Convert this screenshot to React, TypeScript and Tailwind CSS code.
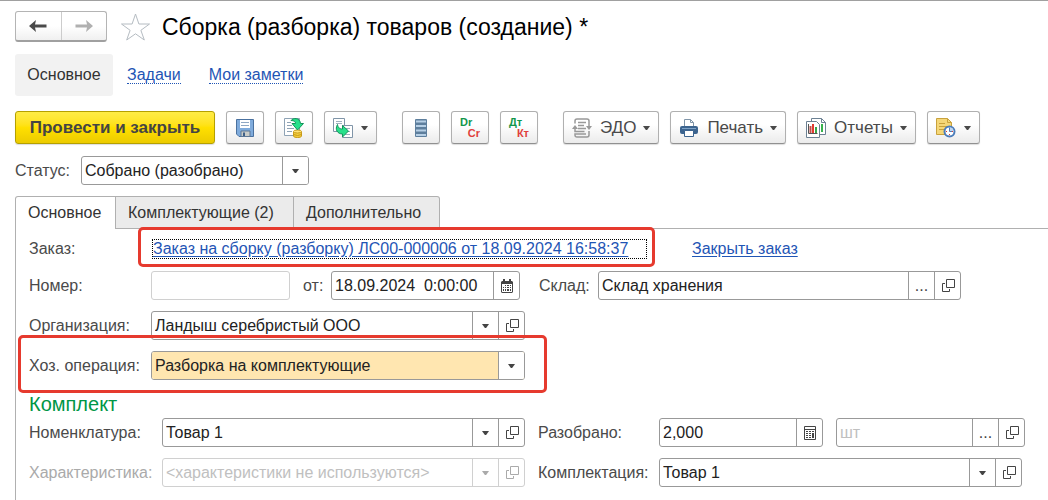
import type { ReactNode } from 'react';
import clsx from 'clsx';

const TABS = [
  { label: 'Основное', active: true, width: 'w-[101px]' },
  { label: 'Комплектующие (2)', active: false, width: 'w-[178px]' },
  { label: 'Дополнительно', active: false, width: 'w-[146px]' },
];

function Caret() {
  return (
    <svg width="7" height="4" viewBox="0 0 7 4" fill="currentColor" aria-hidden="true">
      <path d="M0 0h7L4.5 3.4q-1 1-2 0z" />
    </svg>
  );
}

function OpenIcon() {
  return (
    <svg width="14" height="14" viewBox="0 0 14 14" fill="none" stroke="currentColor" aria-hidden="true">
      <path d="M5.5.5h8v8h-8z" />
      <path d="M4 4.5H1.5v8h7V10" />
    </svg>
  );
}

function CalendarIcon() {
  return (
    <svg width="14" height="14" viewBox="0 0 14 14" aria-hidden="true">
      <path fill="#444" d="M2 2h1V0h2v2h4V0h2v2h1l1 1v10l-1 1H2l-1-1V3z" />
      <path fill="#fff" d="M2 5h10v8H2z" />
      <path
        fill="#444"
        d="M5 6h1v1H5zM7 6h2v1H7zM10 6h1v1h-1zM3 8h1v1H3zM5 8h1v1H5zM7 8h2v1H7zM10 8h1v1h-1zM3 10h1v2H3zM5 10h1v2H5zM7 10h2v2H7zM10 10h1v2h-1z"
      />
    </svg>
  );
}

function CalculatorIcon() {
  return (
    <svg width="12" height="14" viewBox="0 0 12 14" aria-hidden="true">
      <path fill="none" stroke="#444" d="M.5.5h11v13H.5zM.5 3.5h11" />
      <path
        fill="#444"
        d="M2 5h2v1H2zM5 5h2v1H5zM8 5h2v1H8zM2 7h2v1H2zM5 7h2v1H5zM8 7h2v5H8zM2 9h2v1H2zM5 9h2v1H5zM2 11h2v1H2zM5 11h2v1H5z"
      />
    </svg>
  );
}

function SaveIcon() {
  return (
    <svg width="18" height="18" viewBox="0 0 18 18" aria-hidden="true">
      <path d="M.5.5h17v17H3L.5 15z" fill="#7fabdc" stroke="#4a719f" />
      <path d="M4 1h10v8H4z" fill="#fff" />
      <path d="M5 3.5h8M5 6.5h8" stroke="#8fa8c4" />
      <path d="M5 12h9v5.5H5z" fill="#c9ccc9" stroke="#5d7795" />
      <path d="M7 13.5h2V17H7z" fill="#3f6088" />
    </svg>
  );
}

function PostIcon() {
  return (
    <svg width="20" height="20" viewBox="0 0 20 20" aria-hidden="true">
      <path d="M.5.5h15v17H.5z" fill="#fff" stroke="#8fa3b5" />
      <path d="M3 4.5h4M3 7.5h5M3 10.5h7M3 13.5h5" stroke="#8fa3b5" />
      <path d="M9.5 14v4c0 2 8 2 8 0v-4" fill="#f3cd3c" stroke="#c79a1a" />
      <ellipse cx="13.5" cy="13.5" rx="4" ry="1.5" fill="#ffe477" stroke="#c79a1a" />
      <path d="M9.5 16.5q4 2 8 0" fill="none" stroke="#c79a1a" />
      <path d="M7 2.5C9-.5 16-.5 16.500 5.500h3L13.500 12 8 5.500h3.500C11.500 3.500 10 2.500 7 2.500z" fill="#27e08a" stroke="#12935a" />
    </svg>
  );
}

function CreateFromIcon() {
  return (
    <svg width="20" height="20" viewBox="0 0 20 20" aria-hidden="true">
      <path d="M.5.5h11v13H.5z" fill="#fff" stroke="#8095a8" />
      <path d="M3 3.5h6M3 5.5h6" stroke="#9fb0bf" />
      <path d="M9.5 7.5h10v12h-10z" fill="#fff" stroke="#8095a8" />
      <path d="M13 10.5h4M14 13.5h3M12 16.5h5" stroke="#9fb0bf" />
      <path d="M4.500 6.500c-3 5 0 9.500 5 9.500v3l6-6-6-5.500v3.500c-2.500 0-4.500-1-5-4.500z" fill="#27e08a" stroke="#12935a" />
    </svg>
  );
}

function RegistersIcon() {
  return (
    <svg width="14" height="18" viewBox="0 0 14 18" aria-hidden="true">
      <rect x="1" width="12" height="18" rx="1" fill="#5e7f9d" />
      <path d="M2 2.500h10M2 7h10M2 11.500h10M2 16h10" stroke="#b7d0e6" strokeWidth="2" />
    </svg>
  );
}

function EdoIcon() {
  return (
    <svg width="20" height="20" viewBox="0 0 20 20" fill="none" stroke="#999" strokeWidth="1.5" aria-hidden="true">
      <path d="M3 5.5V3c0-1.300.7-2 2-2h10c1.300 0 2 .7 2 2v5M3 11v2.500h9.500" />
      <path d="M17 13v4c0 1.300-.7 2-2 2H5c-1.300 0-2-.7-2-2v-1h11" />
      <path d="M6 4.500h8M6 7.500h6M6 10.500h8" />
      <path d="M3 7L0 11h6zM17 12l-3-4h6z" fill="#999" stroke="none" />
    </svg>
  );
}

function PrintIcon() {
  return (
    <svg width="18" height="18" viewBox="0 0 18 18" aria-hidden="true">
      <path d="M4.5 8V.5h6l3 3V8" fill="#fff" stroke="#8095a8" />
      <path d="M10.5.5v3h3" fill="none" stroke="#8095a8" />
      <rect y="7" width="18" height="8" rx="2" fill="#3c648f" />
      <path d="M2 9.5h14" stroke="#7ea2c6" />
      <path d="M4.5 11.5h9v6h-9z" fill="#fff" stroke="#3c648f" />
    </svg>
  );
}

function ReportIcon() {
  return (
    <svg width="20" height="20" viewBox="0 0 20 20" aria-hidden="true">
      <path d="M5.5.5h10l4 4v12h-14z" fill="#fff" stroke="#6c8193" />
      <path d="M15.5.5v4h4" fill="none" stroke="#6c8193" />
      <path d="M16 6v8" stroke="#37b24d" strokeWidth="2" />
      <path d="M.5 3.500h10l3 3v13H.5z" fill="#fff" stroke="#6c8193" />
      <path d="M2.500 6v9.500h9" fill="none" stroke="#555" />
      <path d="M4.500 8v7" stroke="#c0504d" strokeWidth="2" />
      <path d="M7 6v9" stroke="#e23c30" strokeWidth="2" />
      <path d="M10 9v6" stroke="#37a548" strokeWidth="2" />
    </svg>
  );
}

function HistoryIcon() {
  return (
    <svg width="20" height="20" viewBox="0 0 20 20" aria-hidden="true">
      <path d="M.5.5h11l4 4v12H.5z" fill="#f5d778" stroke="#c9a23c" />
      <path d="M11.500.5v4h4M3 5.500h6M3 8.500h8M3 11.500h5" fill="none" stroke="#c9a23c" />
      <circle cx="13.500" cy="13.500" r="5" fill="#fff" stroke="#4c7dba" strokeWidth="2" />
      <path d="M13.500 13.500V9.500a4 4 0 0 1 4 4z" fill="#bcd4ef" />
      <path d="M13.500 9.500v4h3" fill="none" stroke="#4c7dba" />
      <path d="M10 13h1v1h-1zM13 16h1v1h-1zM16 13h1v1h-1z" fill="#e23c30" />
    </svg>
  );
}

function ToolButton({ label, text, icon, menu }: { label: string; text?: string; icon: ReactNode; menu?: boolean }) {
  return (
    <button
      type="button"
      aria-label={label}
      className="flex h-[33px] shrink-0 items-center justify-center rounded-[3px] border border-[#b0b0b0] border-b-[#909090] bg-linear-to-b from-white from-40% to-[#ebebeb] px-2 shadow-[0_1px_1px_#ddd]"
    >
      <span className="flex w-5 shrink-0 justify-center">{icon}</span>
      {text && <span className="ml-2 text-[17px]">{text}</span>}
      {menu && (
        <span className={clsx('flex w-[7px]', text ? 'ml-[7px]' : 'ml-2')}>
          <Caret />
        </span>
      )}
    </button>
  );
}

function Entries({ top, bottom }: { top: string; bottom: string }) {
  return (
    <span className="flex w-5 shrink-0 flex-col text-[11px] leading-[11px] font-bold">
      <span className="self-start text-[#12964a]">{top}</span>
      <span className="self-end text-[#e0403c]">{bottom}</span>
    </span>
  );
}

function CellButton({ label, disabled, children }: { label: string; disabled?: boolean; children: ReactNode }) {
  return (
    <button
      type="button"
      aria-label={label}
      disabled={disabled}
      className={clsx(
        'flex w-[26px] shrink-0 items-center justify-center border-l',
        disabled ? 'border-[#d0d0d0] text-[#aaa]' : 'border-[#999] text-[#444]',
      )}
    >
      {children}
    </button>
  );
}

function Box({ className, muted, children }: { className: string; muted?: boolean; children?: ReactNode }) {
  return (
    <div
      className={clsx(
        'flex h-[29px] overflow-hidden rounded-[3px] border bg-white',
        muted ? 'border-[#d0d0d0]' : 'border-[#999]',
        className,
      )}
    >
      {children}
    </div>
  );
}

function Dropdown({ id, value, disabled, marked }: { id: string; value: string; disabled?: boolean; marked?: boolean }) {
  return (
    <div className="relative flex min-w-0 flex-1">
      <select
        id={id}
        disabled={disabled}
        className={clsx(
          'min-w-0 flex-1 appearance-none pr-7 pl-[3px] outline-none',
          disabled ? 'text-[#c0c0c0] opacity-100' : 'text-[#222]',
          marked && 'bg-[#ffe6b0]',
        )}
      >
        <option>{value}</option>
      </select>
      <span
        className={clsx(
          'pointer-events-none absolute inset-y-0 right-0 flex w-[26px] items-center justify-center border-l bg-white',
          disabled ? 'border-[#d0d0d0] text-[#aaa]' : 'border-[#999] text-[#444]',
        )}
      >
        <Caret />
      </span>
    </div>
  );
}

const inputClass = 'min-w-0 flex-1 pl-[3px] text-[#222] outline-none placeholder:text-[#c0c0c0]';

export default function App() {
  return (
    <div className="flex min-h-screen flex-col border-t border-[#a0a0a0] bg-white font-['Liberation_Sans',Arial,sans-serif] text-base text-[#4a4a4a]">
      {/* Title */}
      <header className="flex items-center pt-[10px] pl-[15px]">
        <div className="flex h-[31px] w-[92px] rounded-[3px] border border-[#b4b4b4] border-b-2 border-b-[#a0a0a0] bg-linear-to-b from-white from-50% to-[#f0f0f0]">
          <button type="button" aria-label="Назад" className="flex flex-1 items-center justify-center border-r border-[#ccc] text-[#4a4a4a]">
            <svg width="18" height="12" viewBox="0 0 18 12" fill="currentColor">
              <path d="M0 6l7-6-1 4.500h11.500v3H6L7 12z" />
            </svg>
          </button>
          <button type="button" aria-label="Вперед" className="flex flex-1 items-center justify-center text-[#b0b0b0]">
            <svg width="18" height="12" viewBox="0 0 18 12" fill="currentColor">
              <path d="M18 6l-7-6 1 4.500H.5v3H12L11 12z" />
            </svg>
          </button>
        </div>
        <button type="button" aria-label="Добавить в избранное" className="ml-[13px]">
          <svg width="31" height="30" viewBox="0 0 31 30" fill="none" stroke="#b5bcc2">
            <path d="M15.500 2l3.400 10H29.500l-8.600 6.300L24.300 28l-8.800-6.200L6.700 28l3.400-9.700L1.500 12h10.600z" />
          </svg>
        </button>
        <h1 className="ml-[11px] text-[23px] leading-7 text-black">Сборка (разборка) товаров (создание) *</h1>
      </header>

      {/* Sections */}
      <nav className="mt-3 flex h-[42px] items-center pl-[15px]">
        <a href="#main" className="flex h-full w-[98px] items-center justify-center rounded-[3px] bg-[#f2f2f2] text-[#333]">
          Основное
        </a>
        <a href="#tasks" className="ml-[14px] border-b border-dotted border-[#1f55b5] leading-[17px] text-[#1f55b5]">
          Задачи
        </a>
        <a href="#notes" className="ml-7 border-b border-dotted border-[#1f55b5] leading-[17px] text-[#1f55b5]">
          Мои заметки
        </a>
      </nav>

      {/* Commands */}
      <div className="mt-[15px] flex flex-wrap gap-x-[25px] gap-y-2 pl-[15px]">
        <div className="flex gap-[11px]">
          <button
            type="button"
            className="h-[33px] w-[200px] rounded-[3px] border border-[#b5a000] bg-linear-to-b from-[#ffec45] via-[#ffe000] to-[#eccb00] text-[17px] font-bold text-[#444] shadow-[0_1px_1px_#ddd]"
          >
            Провести и закрыть
          </button>
          <ToolButton label="Записать" icon={<SaveIcon />} />
          <ToolButton label="Провести" icon={<PostIcon />} />
          <ToolButton label="Создать на основании" icon={<CreateFromIcon />} menu />
        </div>
        <div className="flex gap-[11px]">
          <ToolButton label="Движения документа" icon={<RegistersIcon />} />
          <ToolButton label="Проводки международного учета" icon={<Entries top="Dr" bottom="Cr" />} />
          <ToolButton label="Проводки регламентированного учета" icon={<Entries top="Дт" bottom="Кт" />} />
        </div>
        <div className="flex gap-[11px]">
          <ToolButton label="ЭДО" text="ЭДО" icon={<EdoIcon />} menu />
          <ToolButton label="Печать" text="Печать" icon={<PrintIcon />} menu />
          <ToolButton label="Отчеты" text="Отчеты" icon={<ReportIcon />} menu />
          <ToolButton label="История" icon={<HistoryIcon />} menu />
        </div>
      </div>

      {/* Status */}
      <div className="mt-3 flex items-center pl-[15px]">
        <label htmlFor="status" className="w-[66px]">
          Статус:
        </label>
        <Box className="w-[228px]">
          <Dropdown id="status" value="Собрано (разобрано)" />
        </Box>
      </div>

      {/* Tabs */}
      <div role="tablist" className="relative mt-[11px] -mb-px ml-[15px] flex h-[33px]">
        {TABS.map((tab) => (
          <button
            key={tab.label}
            type="button"
            role="tab"
            aria-selected={tab.active}
            className={clsx(
              'border-t border-r border-[#b0b0b0] pl-3 text-left text-[#333] first:rounded-tl-[3px] first:border-l last:rounded-tr-[3px]',
              tab.width,
              tab.active ? 'bg-white' : 'border-b bg-[#ebebeb]',
            )}
          >
            {tab.label}
          </button>
        ))}
      </div>

      <main className="ml-[15px] flex-1 border-t border-l border-[#b0b0b0] pt-[10px] pr-5 pl-[13px]">
        <div className="flex flex-col gap-[11px]">
          <div className="mb-px flex h-5 items-center">
            <span className="w-[123px]">Заказ:</span>
            <div className="relative w-[495px]">
              <a
                href="#order"
                className="block border border-dotted border-black leading-[18px] whitespace-nowrap text-[#1f55b5] underline underline-offset-2"
              >
                Заказ на сборку (разборку) ЛС00-000006 от 18.09.2024 16:58:37
              </a>
              <div className="pointer-events-none absolute -top-3 -right-2 -bottom-2 -left-[14px] rounded-[5px] border-3 border-[#e63a2e]" />
            </div>
            <a href="#close" className="ml-[45px] whitespace-nowrap text-[#1f55b5] underline underline-offset-2">
              Закрыть заказ
            </a>
          </div>

          <div className="flex items-center">
            <label htmlFor="number" className="w-[122px]">
              Номер:
            </label>
            <Box className="w-[139px]" muted>
              <input id="number" className={inputClass} />
            </Box>
            <label htmlFor="date" className="ml-[13px] w-7">
              от:
            </label>
            <Box className="w-[189px]">
              <input id="date" className={inputClass} defaultValue="18.09.2024  0:00:00" />
              <CellButton label="Выбрать дату">
                <CalendarIcon />
              </CellButton>
            </Box>
            <label htmlFor="stock" className="ml-[19px] w-[59px]">
              Склад:
            </label>
            <Box className="w-[363px]">
              <input id="stock" className={inputClass} defaultValue="Склад хранения" />
              <CellButton label="Выбрать склад">...</CellButton>
              <CellButton label="Открыть склад">
                <OpenIcon />
              </CellButton>
            </Box>
          </div>

          <div className="flex items-center">
            <label htmlFor="company" className="w-[122px]">
              Организация:
            </label>
            <Box className="w-[374px]">
              <Dropdown id="company" value="Ландыш серебристый ООО" />
              <CellButton label="Открыть организацию">
                <OpenIcon />
              </CellButton>
            </Box>
          </div>

          <div className="relative flex items-center self-start">
            <label htmlFor="operation" className="w-[122px]">
              Хоз. операция:
            </label>
            <Box className="w-[374px]">
              <Dropdown id="operation" value="Разборка на комплектующие" marked />
            </Box>
            <div className="pointer-events-none absolute -top-4 -right-[22px] -bottom-[13px] -left-[11px] rounded-[5px] border-3 border-[#e63a2e]" />
          </div>
        </div>

        {/* Kit */}
        <h2 className="mt-[10px] text-xl leading-7 text-[#009646]">Комплект</h2>
        <div className="flex gap-[13px]">
          <div className="flex flex-col gap-[11px]">
            <div className="flex items-center">
              <label htmlFor="item" className="w-[133px]">
                Номенклатура:
              </label>
              <Box className="w-[363px]">
                <Dropdown id="item" value="Товар 1" />
                <CellButton label="Открыть номенклатуру">
                  <OpenIcon />
                </CellButton>
              </Box>
            </div>
            <div className="flex items-center">
              <label htmlFor="feature" className="w-[133px] text-[#aaa]">
                Характеристика:
              </label>
              <Box className="w-[363px]" muted>
                <Dropdown id="feature" value="<характеристики не используются>" disabled />
                <CellButton label="Открыть характеристику" disabled>
                  <OpenIcon />
                </CellButton>
              </Box>
            </div>
          </div>
          <div className="flex flex-col gap-[11px]">
            <div className="flex items-center">
              <label htmlFor="quantity" className="w-[121px]">
                Разобрано:
              </label>
              <Box className="w-[164px]">
                <input id="quantity" className={inputClass} defaultValue="2,000" />
                <CellButton label="Калькулятор">
                  <CalculatorIcon />
                </CellButton>
              </Box>
              <Box className="ml-[13px] w-[189px]">
                <input aria-label="Единица измерения" className={inputClass} placeholder="шт" />
                <CellButton label="Выбрать единицу">...</CellButton>
                <CellButton label="Открыть единицу">
                  <OpenIcon />
                </CellButton>
              </Box>
            </div>
            <div className="flex items-center">
              <label htmlFor="kit" className="w-[121px]">
                Комплектация:
              </label>
              <Box className="w-[363px]">
                <Dropdown id="kit" value="Товар 1" />
                <CellButton label="Открыть комплектацию">
                  <OpenIcon />
                </CellButton>
              </Box>
            </div>
          </div>
        </div>
      </main>
    </div>
  );
}
